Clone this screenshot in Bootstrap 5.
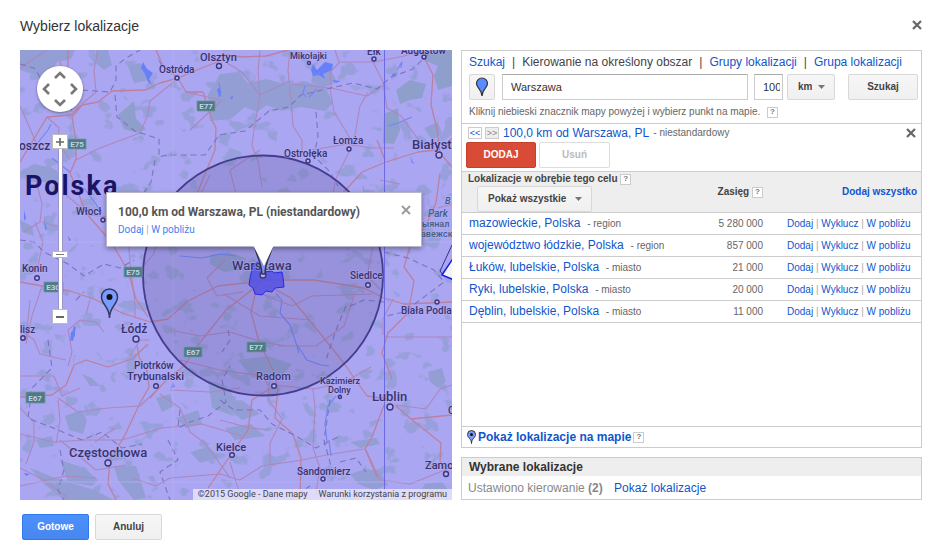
<!DOCTYPE html>
<html lang="pl">
<head>
<meta charset="utf-8">
<meta name="viewport" content="width=device-width, initial-scale=1">
<title>Wybierz lokalizacje</title>
<link rel="stylesheet" href="https://cdn.jsdelivr.net/npm/bootstrap@5.3.0/dist/css/bootstrap.min.css">
<style>
body { font-family: "Liberation Sans", Arial, sans-serif; font-size: 12px; line-height: 16px; color: #444; background: #fff; }
a { color: #15c; text-decoration: none; }
a:hover { text-decoration: underline; }
.dialog-pad { padding: 16px 19px 0 20px; }
.dialog-title { font-size: 14px; line-height: 20px; font-weight: 400; color: #333; }
.x-btn { border: 0; background: none; padding: 0; width: 10px; height: 10px; line-height: 0; }
.x-btn svg { width: 10px; height: 10px; display: block; }
.main-grid { display: grid; grid-template-columns: 432fr 461fr; gap: 9px; margin-top: 14px; }

.map-pane { min-height: 450px; background: #aba6f2; overflow: hidden; font-family: Roboto, sans-serif; }
.map-art { position: absolute; inset: 0; width: 100%; height: 100%; }
.pan-disc { position: absolute; left: 17px; top: 16px; width: 46px; height: 46px; border-radius: 50%; background: #fff; box-shadow: 0 1px 3px rgba(0,0,0,.4); }
.pan-disc button { border: 0; background: none; padding: 0; line-height: 0; }
.pan-disc svg { width: 12px; height: 12px; }
.pan-grid { display: grid; grid-template: repeat(3, 1fr) / repeat(3, 1fr); place-items: center; padding: 2px; }
.pan-up { grid-area: 1 / 2; } .pan-left { grid-area: 2 / 1; } .pan-right { grid-area: 2 / 3; } .pan-down { grid-area: 3 / 2; }
.zoom-stack { position: absolute; left: 32px; top: 84px; width: 16px; }
.zoom-key { width: 16px; height: 15px; padding: 0; border: 1px solid #bbb; border-radius: 1px; background: #fff; line-height: 0; }
.zoom-key svg { width: 8px; height: 8px; }
.zoom-rail { width: 5px; height: 160px; background: #fff; border: 1px solid #9a97c8; border-width: 0 1px; }
.zoom-grip { position: absolute; top: 117px; width: 16px; height: 7px; padding: 0; border: 1px solid #bbb; background: linear-gradient(#fff 0 2px, #777 2px 3px, #fff 3px) center / 8px 5px no-repeat #fff; }
.bubble { position: absolute; left: 86px; top: 142px; width: 316px; padding: 12px 10px 9px 11px; background: #fff; border: 1px solid #b5b5c8; box-shadow: 0 2px 5px rgba(0,0,0,.35); font-size: 10px; line-height: 14px; color: #aaa; }
.bubble a { color: #427fed; }
.bubble strong { font-size: 12px; line-height: 14px; font-weight: 700; color: #555; }
.bubble-tail { position: absolute; left: 146px; top: 100%; width: 21px; height: 22px; margin-top: -1px; }
.credit { position: absolute; right: 0; bottom: 0; font-size: 9px; line-height: 11px; color: #444; }
.credit span, .credit a { background: rgba(235,233,252,.8); padding: 0 5px; color: #444; display: block; }

.edge { border: 1px solid #ccc; }
.edge-b { border-bottom: 1px solid #ccc; }
.search-pad { padding: 3px 3px 4px 7px; }
.tab-bar { column-gap: 7px; }
.fine { font-size: 10px; line-height: 14px; color: #666; }
.hint { margin-top: 5px; }
.g-btn { font-size: 10px; line-height: 14px; font-weight: 700; color: #444; border: 1px solid #d8d8d8; border-radius: 2px; background: linear-gradient(#f6f6f6, #f0f0f0); padding: 5px 10px; min-height: 26px; }
.g-btn:hover { border-color: #bbb; color: #222; }
select.g-btn { appearance: none; background: url("data:image/svg+xml,%3Csvg xmlns='http://www.w3.org/2000/svg' viewBox='0 0 14 8'%3E%3Cpath d='M0 0h14L7 8z' fill='%23777'/%3E%3C/svg%3E") right 9px center / 7px 4px no-repeat, linear-gradient(#f6f6f6, #f0f0f0); padding-right: 22px; }
.pin-btn { width: 26px; padding: 2px; line-height: 0; margin-right: 3px; }
.txt { border: 1px solid #ccc; border-top-color: #aaa; border-radius: 0; font-size: 11px; line-height: 16px; color: #333; padding: 4px 8px; height: 26px; min-width: 0; }
.txt-place { margin-right: 2px; }
.txt-km { width: 29px; padding: 4px 2px 4px 8px; flex: none; }
.search-row { gap: 4px; margin-top: 4px; }
.unit { width: 48px; }
.go { width: 70px; margin-left: 9px; }
.q { width: 11px; height: 11px; padding: 0; border: 1px solid #ccc; background: #fff; color: #777; font-size: 8px; line-height: 8px; font-weight: 700; vertical-align: 1px; flex: none; }
.step { width: 14px; height: 12px; padding: 0; border: 1px solid #ccc; background: #fff; color: #15c; font-size: 9px; line-height: 10px; display: flex; justify-content: center; }
.step:disabled { background: #eee; color: #888; }
.target-pad { padding: 1px 5px 3px 4px; }
.target-pad .step:first-child { margin-left: 2px; }
.step-next { margin: 0 4px 0 3px; }
.btn-add { color: #fff; background: #d84b37; border-color: #c6402d; width: 70px; }
.btn-add:hover { color: #fff; background: #c53727; }
.btn-gone, .btn-gone:disabled { background: #fff; color: #bbb; border-color: #ddd; width: 71px; opacity: 1; }
.target-btns { gap: 3px; margin-top: 1px; }
.loc { width: 100%; table-layout: fixed; }
.loc th { background: #eee; border-bottom: 1px solid #ccc; font-size: 10px; line-height: 14px; padding: 0; color: #444; }
.loc td { border-bottom: 1px solid #ccc; padding: 0; height: 22px; line-height: 20px; font-size: 10px; color: #aaa; }
.loc td:first-child { padding-left: 7px; color: #666; }
.loc td:first-child a { font-size: 12px; margin-right: 4px; }
.loc .num { color: #666; text-align: right; }
.loc .acts { padding-left: 24px; white-space: nowrap; line-height: 18px; }
.loc .num { line-height: 18px; }
.c-num { width: 86px; } .c-act { width: 158px; }
.loc .th-name { padding-left: 6px; }
.filter { width: 115px; margin-left: 9px; }
.show-map { border-top: 1px solid #ccc; padding: 2px 5px; font-weight: 700; gap: 2px; }
.show-map svg { width: 9px; height: 14px; }
.chosen { margin-top: 9px; }
.chosen h2 { font-size: 12px; line-height: 18px; font-weight: 700; color: #333; background: #eee; padding: 0 7px; margin: 0; }
.chosen p { margin: 0; padding: 4px 6px 3px; color: #888; }
.foot { padding: 14px 0 0 2px; gap: 6px; }
.foot .g-btn { width: 67px; }
.btn-ok { color: #fff; background: linear-gradient(#4d90fe, #4787ed); border-color: #3079ed; }
.btn-ok:hover { color: #fff; border-color: #2f5bb7; }
</style>
<script src="https://cdn.jsdelivr.net/npm/bootstrap@5.3.0/dist/js/bootstrap.bundle.min.js"></script>
</head>
<body>
<div class="dialog-pad">
  <header class="d-flex justify-content-between align-items-start">
    <h1 class="dialog-title m-0">Wybierz lokalizacje</h1>
    <button class="x-btn mt-1" aria-label="Zamknij"><svg viewBox="0 0 10 10"><path d="M1 1l8 8M9 1L1 9" stroke="#666" stroke-width="2.200"/></svg></button>
  </header>

  <main class="main-grid">
    <section class="map-pane position-relative" aria-label="Mapa">
      <svg class="map-art" viewBox="20 50 432 450" preserveAspectRatio="xMidYMid slice">
        <defs>
          <filter id="woods" x="0" y="0" width="100%" height="100%" color-interpolation-filters="sRGB">
            <feTurbulence type="fractalNoise" baseFrequency=".05 .06" numOctaves="3" seed="12"/>
            <feColorMatrix values="0 0 0 0 .57  0 0 0 0 .62  0 0 0 0 .83  14 0 0 0 -8.600"/>
          </filter>
        </defs>
        <rect x="20" y="50" width="432" height="450" fill="#aba6f2"/>
        <rect x="20" y="50" width="432" height="450" filter="url(#woods)" opacity=".7"/>
        <g fill="#939fd4">
          <path d="M20 50h55l-4 9-14 3-5 9-16 4-16-5zM96 50h12l4 15-8 5-8-7zM128 66l12-3 10 8-4 10-12 2z"/>
          <path d="M220 74l18-2 10 11 18-4 23 6 14-4 22 6 8 16-8 8-24-4-20 4-14-6-10 7-12-5-14 12-21 2-2-26zM313 72l18-2 6 12-14 6-12-6z"/>
          <path d="M420 50h32v36l-14 4-4-14 4-10-14-6zM396 90l14-10 16 4-4 14-12 2-10 4zM384 114l14-6 2 22-6 14-11-1zM118 115l16-14 2 18 10 10-8 4-14-4z" fill="#8f9fcc"/>
          <path d="M20 172l14-8 18 4 14 8-10 6-26 0zM27 68l20 4 2 8-12-4zM424 128l14-6 4 12-10 6zM20 220l12 6 2 10-12-4z"/>
          <path d="M210 255l18-3 18 6-2 12-20 2-14-8zM170 192l20 0-4 6-16 4zM65 416l16-6 6 10-4 14-14-4zM82 374l10 4 8 8-10 0zM156 398l14-4 4 12-12 6zM60 460l24 8 14 12-6 6-24-4zM30 468l20 8 44 14 20 10H64l-20-16zM114 466l22 0 4 12 6 20-12 2-16-20zM208 380l18 6 10 14-8 14-16-6z"/>
          <path d="M238 360l30-4 24 8-10 12-30 2zM350 474l16-5 14 2 8 14-14 5-16-6zM428 372l14-4 4 14-8 6-8-6zM222 402l20-2 18 14-18 6zM350 442l26-4 4 6-20 4zM424 484l18-2 8 10-24 3zM225 428l26-4 14 12-30 4zM176 418l22-8 4 14-16 4zM36 440l16-4 2 10-14 2zM190 452l18-5 12 10-20 6z"/>
        </g>
        <g fill="#6680fb">
          <path d="M313 64l4 6 8-8 8 2-1 6-9 4 2 5-6-4-6 1-2-6zM143 62l4 7 6 4-4 6 3 6-4-3-3-8-4-6zM332 80l9 1-5 2zM392 74l5-1-4 4zM217 89l3-1 1 8-2 1zM70 340l4-14 2 1-3 14zM75 330l0 6-5 6 1-10zM157 57l6 9-2 0zM230 97l3-1-1 4zM44 218l3 12-2-1zM24 210l2 8-2 3zM68 236l3 4-2 1zM410 156l4 8-2-1zM24 473l6 1-4 2zM173 382l2 5-4 1z"/>
        </g>
        <g fill="none" stroke="#6f86f8" stroke-width="1.200">
          <path d="M305 86l-2 7 3 4M309 97l5-5 2-3M314 75l6-2M397 70l5-8-1 6M219 83l2 10M36 145l12-15 3-6M52 158l18 14M84 188l12 16 6 10M180 256l22 2 18-4 16 2"/>
          <path d="M276 293l6 8-2 12 10 12 6 18 3 10M297 345l10 15 14 5 8 1M336 396l-8 10-3 18 2 18M342 393l-5 4M329 440l2 16M388 126l10-3 14-6"/>
        </g>
        <g fill="none" stroke="#ac87bc" stroke-width="1.100" stroke-linejoin="round">
          <path d="M98 50l-4 20 2 22-14 12M20 68l27-18M60 62l8 30 4 20M47 117l12 11-1 14 12 18M76 160l24-12 40-15 7-16 3-16 25-20M20 106l8 18 8 18M186 92l34 8M222 60l20 12 18 23-6 35-2 16 6 15 4 26M260 50l-2 22 2 23 30-14M290 50l-2 20 3 30 2 26 9 14 0 12M291 84l40 4 36 8 18-12M331 88l-1-16 10-10 34 0 30-6 20-6M330 88l4 24 16 26 3 8 7-40 8-14M312 150l35-6 24 4 22 0"/>
          <path d="M335 50l4 12M371 58l12 24 4 26 14 8 22 30M350 150l-14 28-4 20M380 180l20 4M438 208l14-4M36 180l6 24-2 18-16 10M42 222l20 6M60 190l30 25 30 3 30 6M30 300l-4 40M37 270l6-28-8-20M42 286l-10 30-6 28M90 300l-4 14M110 225l18 10 2 28 5 40 0 15M20 330l14 10 6 14 26 6M68 366l4-14-4-22 12-10 16 2 8 10"/>
          <path d="M20 376l34 0 8 20 18-8M58 398l20 14 30-4 32-2 16-15M20 408l14 14 0 20-8 22M20 434l34 8 30-2 38 0 40-12 40-4 40 12M58 400l2 20-4 24M60 440l36 30 30-5M20 486l46-10 30 2M95 442l20-14M160 394l20 14 10 24 16 12 24 34M132 478l24 8 14-8 50-4 20 6 22-14 40-6 24-5 38-6M20 468l24 12 24 18M230 462l4 14 8 24"/>
          <path d="M270 375l-2 24 14 20-12 24 0 22M273 385l40 4 30-6 28-16M313 388l2 20-2 40 7 20-5 30M170 390l40 2 30-4M220 420l30 8 20 2M310 320l-50-4-36-22M225 260l-18 18 10 18 26-4M262 294l30 12 20-10 60-2M363 186l10 60-6 30 14 14M383 335l0-16 10-20M385 337h67M366 450l14 30 30 4 40-16M396 405l30 4 14-20 12-4"/>
          <path d="M150 340l-10 0-10 16M190 130l32-30M210 175l-10 20M240 210l-10-40 30-20M145 210l18 15-10 30-18 20M170 330l30 6 30-4 32 10 24 4M180 360l40 10 44 6 4 10M354 296l-10 30-28 20-38 0"/>
        </g>
        <g fill="none" stroke="#bb809f" stroke-width="1.300" stroke-linejoin="round">
          <path d="M222 60l-20 8-24 10-18 5-15 7-33 1-14 11-16 3-10 12M156 50l7 16 15 12 8 14 17 0 9 28 4 8-1 22-10 24-8 20M68 50v18M72 117l4 24 0 18-6 14 6 14 10 26 26 30 16 28 8 28 12 18M20 162l27-45 24-2 10-10M222 54l20 3 24-1 22-6M424 57l9 18-2 30 6 24 3 24 12 14M436 150l-18 2-32 10-24 10-20 22-14 14M443 150l9-12"/>
          <path d="M20 282l50 9 24 8 28 14 28 9 18-3 20-18 30-15 44-5M264 280l50 0 50 8 20 10 20 6 48-2M258 282l-7 30 8 30 14 28 5 18-3 30 18 16 8 24-1 42M265 284l26 14 20 24 32 40 24 34 22 3M384 405l-12 32-7 12 12 28M395 405l16 14 41-4M411 419l30 24-1 18 8 14M137 345l2 12 8 14 2 16-10 18-14 30-15 25-2 24 8 16M20 397l32-2 14-10 8-20 12-5 22 7 24-8 16-15M262 282l-36 28-24 30-18 26-16 12-18 20M274 386l-22 14-4 30-18 26-22 32M385 160l-8-20M440 173l-4 30-10 22-16 22-6 20 10 14-6 32-20 20-6 20 10 26"/>
        </g>
        <g fill="none" stroke="#7b74c0" stroke-width="1.100" stroke-dasharray="6 4" stroke-linejoin="round">
          <path d="M20 64l14 4 8 12M82 90l28 2 6-12 0-14 10-8 14-8M115 95l2 22 18 14 24 8 0 18 8-2 38 0 14-20 26-4 24-20 20-4 12-12 34-8 18-4 24 6 14-12 22-8 20-20 24-10 12-20"/>
          <path d="M155 160l-4 22-12 18-30-2M20 240l14 2 10 10 24 12 16 12 20-12 16 4 14-8M316 112l2 24-4 20 16 16 8 14M48 340l4 28-20 20-4 30 30 12 24 10 20-8 20 16 20-4M180 410l-2 18 12-6 18-6 18-14-4-22 8-14M76 300l8-8M168 440l10 20-18 12 10 28M60 450l4 20-6 20 6 10"/>
          <path d="M220 400l14 10 26 0 12 14 24 12 20 12 24-12M340 462l16-4 10 14M384 252l24 6 26 12 10 12-40 30-18 4M350 306l14-6 20 2M346 306l-10 24-10 30M228 330l2 10-8 12M330 400l-6 40 8 30M290 500l20-14"/>
        </g>
        <path d="M173 50v450M20 242h432M20 482h432" stroke="#b5b0f6" fill="none" opacity=".7"/>
        <path d="M384.500 50v450" stroke="#6d69e2"/>
        <circle cx="263" cy="275.500" r="120" fill="#564f92" fill-opacity=".22" stroke="#443d8e" stroke-width="1.800"/>
        <path d="M250 278l3-13 5-3 6 10 8-1 2 2 8-1 1 5 1 10-9 1-3 4-6-1-4 4-7-1-2-6-4-3z" fill="#504ee3" fill-opacity=".8" stroke="#2929e8"/>
        <path d="M452 245l-12 26 4 5 8-10" fill="none" stroke="#373189"/>
        <path d="M454 257l-12 18 12 5" fill="#f2f2f2" stroke="#1818ee" stroke-width="1.500"/>
        <g fill="#4b7c83" stroke="#73929f" stroke-width=".800">
          <path d="M197 101h18v10h-18zM68 139h18v10H68zM124 267h18v10h-18zM44 282h19v10H44zM184 347h18v10h-18zM247 342h19v10h-19zM26 392h19v11H26z"/>
        </g>
        <g font-size="8" font-weight="700" fill="#c4cfe3" text-anchor="middle">
          <text x="206" y="109">E77</text><text x="77" y="147">E75</text><text x="133" y="275">E75</text><text x="53" y="290">E30</text><text x="193" y="355">E67</text><text x="256" y="350">E77</text><text x="35" y="401">E67</text>
        </g>
        <g fill="#b5b2f0" stroke="#3c367e" stroke-width="1.400">
          <circle cx="219" cy="66" r="2.500"/><circle cx="177" cy="78" r="2"/><circle cx="309" cy="63" r="1.500"/><circle cx="374" cy="59" r="2"/><circle cx="424" cy="57" r="2"/><circle cx="349" cy="149" r="2"/><circle cx="308" cy="161" r="2"/><circle cx="439" cy="155" r="3"/><circle cx="103" cy="220" r="2"/><circle cx="37" cy="278" r="2.300"/><circle cx="23" cy="338" r="2.200"/><circle cx="136" cy="339" r="3"/><circle cx="156" cy="386" r="2.300"/><circle cx="108" cy="463" r="3"/><circle cx="232" cy="455" r="2.300"/><circle cx="274" cy="386" r="2.300"/><circle cx="368" cy="285" r="2.300"/><circle cx="437" cy="302" r="2"/><circle cx="390" cy="407" r="3"/><circle cx="340" cy="397" r="1.500"/><circle cx="323" cy="479" r="2"/><circle cx="446" cy="474" r="2.500"/><circle cx="263" cy="275" r="3"/>
        </g>
        <g fill="#38326f" stroke="#b5b1f3" stroke-opacity=".55" stroke-width="1.500" paint-order="stroke" font-size="10" font-weight="500">
          <text x="200" y="61" font-size="11">Olsztyn</text><text x="159" y="73">Ostróda</text><text x="290" y="59" font-size="9">Mikołajki</text><text x="367" y="55">Ełk</text><text x="401" y="54">Augustów</text>
          <text x="333" y="144">Łomża</text><text x="284" y="157">Ostrołęka</text><text x="412" y="149" font-size="13">Białyst</text><text x="19" y="150" font-size="12">oszcz</text>
          <text x="76" y="215">Włocł</text><text x="22" y="272">Konin</text><text x="20" y="333">lisz</text><text x="121" y="333" font-size="12">Łódź</text>
          <text x="134" y="369">Piotrków</text><text x="127" y="380" font-size="11">Trybunalski</text><text x="69" y="457" font-size="13">Częstochowa</text><text x="216" y="451" font-size="11">Kielce</text><text x="256" y="380" font-size="11">Radom</text>
          <text x="320" y="384" font-size="9">Kazimierz</text><text x="328" y="393" font-size="9">Dolny</text><text x="372" y="401" font-size="13">Lublin</text><text x="297" y="475" font-size="10">Sandomierz</text><text x="425" y="469" font-size="11">Zamo</text>
          <text x="350" y="279">Siedlce</text><text x="401" y="314">Biała Podla</text><text x="232" y="270" font-size="13">Warszawa</text><text x="448" y="414">C</text>
          <text x="445" y="204" font-size="9" font-style="italic" fill="#416086">B</text><text x="428" y="217" font-size="10" font-style="italic" fill="#416086">Park</text><text x="422" y="227" font-size="9" fill="#416086">ыянал</text><text x="421" y="237" font-size="9" fill="#416086">авежск</text>
        </g>
        <text x="25" y="195" font-size="27" font-weight="700" letter-spacing="2" fill="#191465">Polska</text>
        <path d="M254 240c0 13 7 19 8 34h3c0-15 8-20 8-34" fill="#8293ee" stroke="#33364f" stroke-width="1.500"/>
        <path d="M109.500 318c0-12-8-13-8-21a8 8 0 0 1 16 0c0 8-8 9-8 21z" fill="#7b9bff" stroke="#30395f" stroke-width="1.500"/><circle cx="109.500" cy="297" r="3" fill="#111"/>
      </svg>
      <div class="pan-disc pan-grid">
        <button class="pan-up" aria-label="W górę"><svg viewBox="0 0 12 12"><path d="M1 9l5-5 5 5" fill="none" stroke="#777" stroke-width="2.600"/></svg></button>
        <button class="pan-left" aria-label="W lewo"><svg viewBox="0 0 12 12"><path d="M9 1L4 6l5 5" fill="none" stroke="#777" stroke-width="2.600"/></svg></button>
        <button class="pan-right" aria-label="W prawo"><svg viewBox="0 0 12 12"><path d="M3 1l5 5-5 5" fill="none" stroke="#777" stroke-width="2.600"/></svg></button>
        <button class="pan-down" aria-label="W dół"><svg viewBox="0 0 12 12"><path d="M1 3l5 5 5-5" fill="none" stroke="#777" stroke-width="2.600"/></svg></button>
      </div>
      <div class="zoom-stack d-flex flex-column align-items-center">
        <button class="zoom-key" aria-label="Powiększ"><svg viewBox="0 0 8 8"><path d="M4 0v8M0 4h8" stroke="#666" stroke-width="1.600"/></svg></button>
        <div class="zoom-rail"></div>
        <button class="zoom-key" aria-label="Pomniejsz"><svg viewBox="0 0 8 8"><path d="M0 4h8" stroke="#555" stroke-width="1.800"/></svg></button>
        <button class="zoom-grip" aria-label="Poziom powiększenia"></button>
      </div>
      <div class="bubble">
        <div class="d-flex justify-content-between align-items-start">
          <strong>100,0 km od Warszawa, PL (niestandardowy)</strong>
          <button class="x-btn" aria-label="Zamknij"><svg viewBox="0 0 10 10"><path d="M1 1l8 8M9 1L1 9" stroke="#999" stroke-width="1.800"/></svg></button>
        </div>
        <div class="mt-1"><a href="#">Dodaj</a> | <a href="#">W pobliżu</a></div>
        <svg class="bubble-tail" viewBox="0 0 21 22"><path d="M0 0h21L11 21z" fill="#fff"/></svg>
      </div>
      <div class="credit d-flex"><span>©2015 Google - Dane mapy</span><a href="#" class="border-start">Warunki korzystania z programu</a></div>
    </section>

    <section class="d-flex flex-column">
      <div class="edge flex-grow-1 d-flex flex-column">
        <form class="search-pad edge-b">
          <nav class="tab-bar d-flex flex-nowrap text-nowrap"><a href="#">Szukaj</a><span>|</span><span>Kierowanie na określony obszar</span><span>|</span><a href="#">Grupy lokalizacji</a><span>|</span><a href="#">Grupa lokalizacji</a></nav>
          <div class="search-row d-flex">
            <button type="button" class="g-btn pin-btn" aria-label="Znacznik"><svg width="14" height="20" viewBox="0 0 14 20"><path d="M7 19c0-7-5.500-8-5.500-12.500a5.500 5.500 0 0 1 11 0C12.500 11 7 12 7 19z" fill="#5b8cff" stroke="#333" stroke-width="1.200"/></svg></button>
            <input class="txt txt-place flex-grow-1" aria-label="Lokalizacja" value="Warszawa">
            <input class="txt txt-km" aria-label="Promień" value="100">
            <select class="g-btn unit" aria-label="Jednostka"><option>km</option></select>
            <button type="button" class="g-btn go">Szukaj</button>
          </div>
          <div class="fine hint">Kliknij niebieski znacznik mapy powyżej i wybierz punkt na mapie. <button type="button" class="q ms-1">?</button></div>
        </form>
        <div class="target-pad edge-b">
          <div class="d-flex align-items-center">
            <button class="step">&lt;&lt;</button><button class="step step-next" disabled>&gt;&gt;</button>
            <a href="#">100,0 km od Warszawa, PL</a><span class="fine ms-1">- niestandardowy</span>
            <button class="x-btn ms-auto" aria-label="Usuń cel"><svg viewBox="0 0 10 10"><path d="M1 1l8 8M9 1L1 9" stroke="#666" stroke-width="2.200"/></svg></button>
          </div>
          <div class="target-btns d-flex"><button class="g-btn btn-add">DODAJ</button><button class="g-btn btn-gone" disabled>Usuń</button></div>
        </div>
        <table class="loc">
          <colgroup><col><col class="c-num"><col class="c-act"></colgroup>
          <thead><tr>
            <th class="th-name"><div>Lokalizacje w obrębie tego celu <button class="q">?</button></div><select class="g-btn filter d-block" aria-label="Filtr"><option>Pokaż wszystkie</option></select></th>
            <th class="text-end">Zasięg <button class="q">?</button></th>
            <th class="text-end pe-1"><a href="#">Dodaj wszystko</a></th>
          </tr></thead>
          <tbody>
            <tr><td><a href="#">mazowieckie, Polska</a> - region</td><td class="num">5 280 000</td><td class="acts"><a href="#">Dodaj</a> | <a href="#">Wyklucz</a> | <a href="#">W pobliżu</a></td></tr>
            <tr><td><a href="#">województwo łódzkie, Polska</a> - region</td><td class="num">857 000</td><td class="acts"><a href="#">Dodaj</a> | <a href="#">Wyklucz</a> | <a href="#">W pobliżu</a></td></tr>
            <tr><td><a href="#">Łuków, lubelskie, Polska</a> - miasto</td><td class="num">21 000</td><td class="acts"><a href="#">Dodaj</a> | <a href="#">Wyklucz</a> | <a href="#">W pobliżu</a></td></tr>
            <tr><td><a href="#">Ryki, lubelskie, Polska</a> - miasto</td><td class="num">20 000</td><td class="acts"><a href="#">Dodaj</a> | <a href="#">Wyklucz</a> | <a href="#">W pobliżu</a></td></tr>
            <tr><td><a href="#">Dęblin, lubelskie, Polska</a> - miasto</td><td class="num">11 000</td><td class="acts"><a href="#">Dodaj</a> | <a href="#">Wyklucz</a> | <a href="#">W pobliżu</a></td></tr>
          </tbody>
        </table>
        <div class="show-map mt-auto d-flex align-items-center">
          <svg viewBox="0 0 9 14"><path d="M4.500 13.500c0-5-4-5.500-4-9a4 4 0 0 1 8 0c0 3.500-4 4-4 9z" fill="#7b9bff" stroke="#333"/><circle cx="4.500" cy="4.500" r="1.500" fill="#111"/></svg>
          <a href="#">Pokaż lokalizacje na mapie</a><button class="q">?</button>
        </div>
      </div>
      <div class="edge chosen">
        <h2>Wybrane lokalizacje</h2>
        <p>Ustawiono kierowanie <b>(2)</b> <a href="#" class="ms-2">Pokaż lokalizacje</a></p>
      </div>
    </section>
  </main>

  <footer class="foot d-flex"><button class="g-btn btn-ok">Gotowe</button><button class="g-btn">Anuluj</button></footer>
</div>
</body>
</html>
